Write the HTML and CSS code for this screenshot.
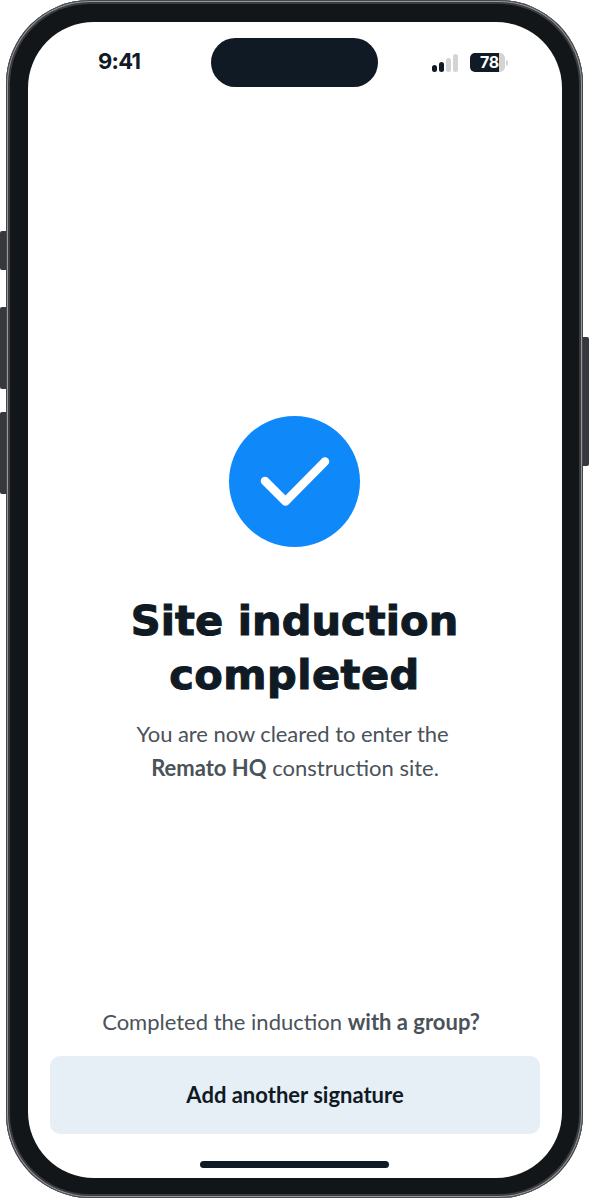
FILE: index.html
```html
<!DOCTYPE html>
<html lang="en">
<head>
<meta charset="utf-8">
<title>Site induction completed</title>
<link rel="stylesheet" href="styles.css">
</head>
<body>
<div class="phone">
  <span class="side-btn mute"></span>
  <span class="side-btn vol-up"></span>
  <span class="side-btn vol-down"></span>
  <span class="side-btn power"></span>
  <div class="bezel">
    <div class="screen">
      <header class="status">
        <span class="time">9:41</span>
        <span class="island"></span>
        <span class="indicators">
          <span class="signal">
            <i class="bar b1"></i><i class="bar b2"></i><i class="bar b3"></i><i class="bar b4"></i>
          </span>
          <span class="battery">
            <span class="battery-body"><span class="battery-level">78</span></span>
            <span class="battery-nub"></span>
          </span>
        </span>
      </header>
      <main class="content">
        <svg class="check" viewBox="0 0 131 131" width="131" height="131" aria-hidden="true">
          <circle cx="65.5" cy="65.5" r="65.5" fill="#0f88fa"/>
          <path d="M36 65 L56.5 85.5 L96 45.5" fill="none" stroke="#fff" stroke-width="8.5" stroke-linecap="round" stroke-linejoin="round"/>
        </svg>
        <h1 class="title">Site induction<br><span class="title-second">completed</span></h1>
        <p class="lead"><span class="lead-first">You are now cleared to enter the</span><strong>Remato HQ</strong> construction site.</p>
      </main>
      <footer class="actions">
        <p class="hint">Completed the induction <strong>with a group?</strong></p>
        <button class="btn" type="button">Add another signature</button>
        <div class="home-bar"></div>
      </footer>
    </div>
  </div>
</div>
</body>
</html>
```
FILE: styles.css
```css
* { box-sizing: border-box; }
html, body { margin: 0; padding: 0; background: #fff; }
body { width: 590px; height: 1200px; overflow: hidden; font-family: "Lato", "Liberation Sans", sans-serif; }

.phone { position: relative; width: 577px; height: 1198px; margin-left: 6px; }

.side-btn { position: absolute; background: #36383d; }
.mute { left: -6px; top: 231px; width: 7px; height: 39px; border-radius: 2px 0 0 2px; }
.vol-up { left: -6px; top: 307px; width: 7px; height: 82px; border-radius: 2px 0 0 2px; }
.vol-down { left: -6px; top: 412px; width: 7px; height: 82px; border-radius: 2px 0 0 2px; }
.power { right: -6px; top: 337px; width: 7px; height: 129px; border-radius: 0 2px 2px 0; }

.bezel {
  position: relative;
  width: 100%;
  height: 100%;
  padding: 22px 21px 20px 22px;
  background: #121618;
  border-radius: 84px;
  box-shadow: inset 0 0 0 1px #45474b, inset 0 0 0 2px #96989b, inset 0 0 0 4px #3a3c40;
}

.screen {
  display: flex;
  flex-direction: column;
  height: 100%;
  background: #fff;
  border-radius: 66px;
  overflow: hidden;
}

.status {
  position: relative;
  display: flex;
  align-items: center;
  justify-content: space-between;
  height: 49px;
  margin-top: 16px;
  padding: 0 54px 0 70px;
  flex: none;
}
.time { margin-bottom: 3px; font: 700 22px/1 "Inter", sans-serif; letter-spacing: -0.7px; color: #111b25; }
.island {
  position: absolute;
  left: 183px;
  top: 0;
  width: 167px;
  height: 49px;
  border-radius: 25px;
  background: #0f1a24;
}
.indicators { display: flex; align-items: center; gap: 12px; }
.signal { display: flex; align-items: flex-end; gap: 2px; height: 18px; }
.bar { display: block; width: 5px; border-radius: 2.5px; }
.b1 { height: 7px; background: #111b25; }
.b2 { height: 10px; background: #111b25; }
.b3 { height: 14px; background: #d2d4d6; }
.b4 { height: 18px; background: #d2d4d6; }
.battery { display: flex; align-items: center; gap: 1px; }
.battery-body {
  display: block;
  width: 35px;
  height: 19px;
  border-radius: 5px;
  background: linear-gradient(to right, #111b25 0 29px, #d2d4d6 29px);
}
.battery-level {
  display: block;
  padding-right: 6px;
  font: 700 16px/19px "Inter", sans-serif;
  letter-spacing: -0.3px;
  color: #fff;
  text-align: right;
}
.battery-nub { width: 2px; height: 6px; border-radius: 0 2px 2px 0; background: #d2d4d6; }

.content {
  display: flex;
  flex-direction: column;
  align-items: center;
  padding-top: 329px;
  text-align: center;
}
.check { display: block; flex: none; margin-right: 1px; }
.title {
  margin: 47px 1px 0 0;
  font: 700 41.5px/54px "DejaVu Sans", sans-serif;
  letter-spacing: 0.1px;
  color: #101a24;
  -webkit-text-stroke: 1.1px #101a24;
}
.title-second { letter-spacing: 0.5px; }
.lead {
  margin: 15px 0 0;
  font-size: 22px;
  line-height: 34px;
  color: #4a525a;
}
.lead-first { display: block; margin-right: 5px; letter-spacing: -0.06px; }
.lead strong, .hint strong { font-weight: 700; }

.actions {
  display: flex;
  flex-direction: column;
  align-items: center;
  margin-top: auto;
  padding: 0 22px 10px;
}
.hint { margin: 0 8px 17px 0; font-size: 22px; line-height: 34px; color: #4a525a; }
.btn {
  display: block;
  width: 100%;
  height: 78px;
  border: 0;
  border-radius: 10px;
  background: #e6eef6;
  font: 700 22px/1 "Lato", sans-serif;
  color: #101a24;
}
.home-bar { width: 189px; height: 7px; margin: 27px 1px 0 0; border-radius: 4px; background: #101a24; }
```
